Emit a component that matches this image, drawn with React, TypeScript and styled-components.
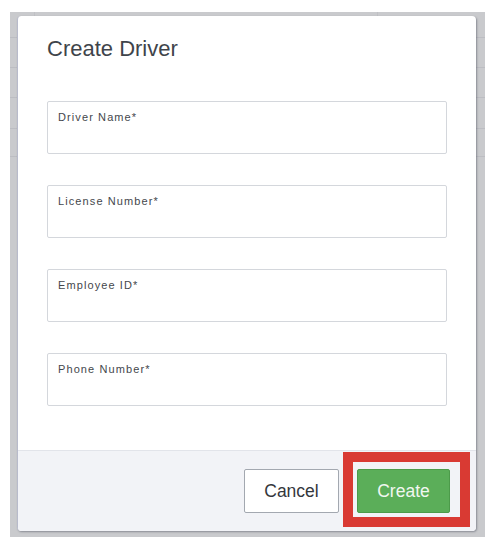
import styled, { createGlobalStyle } from "styled-components";

const GlobalStyle = createGlobalStyle`
  html, body {
    margin: 0;
    padding: 0;
    background: #ffffff;
  }
  body {
    font-family: "Liberation Sans", Arial, sans-serif;
  }
`;

const Page = styled.div`
  width: 494px;
  height: 548px;
  padding: 12px 9px 11px 10px;
  box-sizing: border-box;
`;

const Backdrop = styled.div`
  position: relative;
  height: 100%;
  background: #c9cacd;
  overflow: hidden;
`;

const BgHeader = styled.div`
  display: grid;
  grid-template-columns: 25px 343px 1fr;
  height: 25px;
  border-bottom: 1px solid #bcbdc2;
`;

const BgHeaderCell = styled.div`
  border-right: 1px solid #c0c1c5;
  &:last-child {
    border-right: none;
  }
`;

const BgRow = styled.div<{ $h: number }>`
  height: ${(p) => p.$h}px;
  border-bottom: 1px solid #bcbdc2;
`;

const Overlay = styled.div`
  position: absolute;
  inset: 0;
  padding: 4px 9px 6px 7px;
  display: flex;
`;

const Modal = styled.div`
  flex: 1;
  display: flex;
  flex-direction: column;
  background: #ffffff;
  border-radius: 4px;
  border-left: 1px solid #b8bbcb;
  box-shadow: 1px 1px 2px rgba(60, 64, 80, 0.45);
`;

const Body = styled.div`
  flex: 1;
  padding: 19px 29px 0 29px;
  display: flex;
  flex-direction: column;
`;

const Title = styled.h2`
  margin: 0 0 38px 0;
  font-family: "Liberation Sans", Arial, sans-serif;
  font-size: 22px;
  font-weight: 400;
  line-height: 28px;
  color: #40444b;
`;

const Fields = styled.div`
  display: flex;
  flex-direction: column;
  gap: 31px;
`;

const Field = styled.label`
  display: block;
  height: 53px;
  box-sizing: border-box;
  border: 1px solid #d4d7dc;
  border-radius: 2px;
  padding: 8px 10px;
`;

const FieldLabel = styled.span`
  display: block;
  font-family: "Liberation Sans", Arial, sans-serif;
  font-size: 11px;
  letter-spacing: 1.1px;
  line-height: 14px;
  color: #44474c;
`;

const Footer = styled.div`
  display: flex;
  justify-content: flex-end;
  align-items: center;
  gap: 18px;
  padding: 18px 26px 18px 0;
  background: #f2f3f7;
  border-top: 1px solid #e2e4ea;
  border-radius: 0 0 4px 4px;
`;

const Button = styled.button<{ $primary?: boolean }>`
  height: 44px;
  width: ${(p) => (p.$primary ? "93px" : "95px")};
  box-sizing: border-box;
  border-radius: 2px;
  font-family: "Liberation Sans", Arial, sans-serif;
  font-size: 17.5px;
  cursor: pointer;
  border: 1px solid ${(p) => (p.$primary ? "#4c9b4a" : "#a3a8b0")};
  background: ${(p) => (p.$primary ? "#5bae59" : "#ffffff")};
  color: ${(p) => (p.$primary ? "#f1f7f0" : "#34373c")};
`;

const HighlightWrap = styled.div`
  position: relative;
  display: flex;
`;

const Highlight = styled.span`
  position: absolute;
  top: -17px;
  left: -14px;
  right: -20px;
  bottom: -14px;
  border: 10px solid #d93a33;
  pointer-events: none;
`;

const fields = ["Driver Name*", "License Number*", "Employee ID*", "Phone Number*"];

export default function App() {
  return (
    <>
      <GlobalStyle />
      <Page>
        <Backdrop>
          <BgHeader>
            <BgHeaderCell />
            <BgHeaderCell />
            <BgHeaderCell />
          </BgHeader>
          <BgRow $h={29} />
          <BgRow $h={29} />
          <BgRow $h={30} />
          <BgRow $h={27} />
          <Overlay>
            <Modal>
              <Body>
                <Title>Create Driver</Title>
                <Fields>
                  {fields.map((f) => (
                    <Field key={f}>
                      <FieldLabel>{f}</FieldLabel>
                    </Field>
                  ))}
                </Fields>
              </Body>
              <Footer>
                <Button>Cancel</Button>
                <HighlightWrap>
                  <Button $primary>Create</Button>
                  <Highlight />
                </HighlightWrap>
              </Footer>
            </Modal>
          </Overlay>
        </Backdrop>
      </Page>
    </>
  );
}
